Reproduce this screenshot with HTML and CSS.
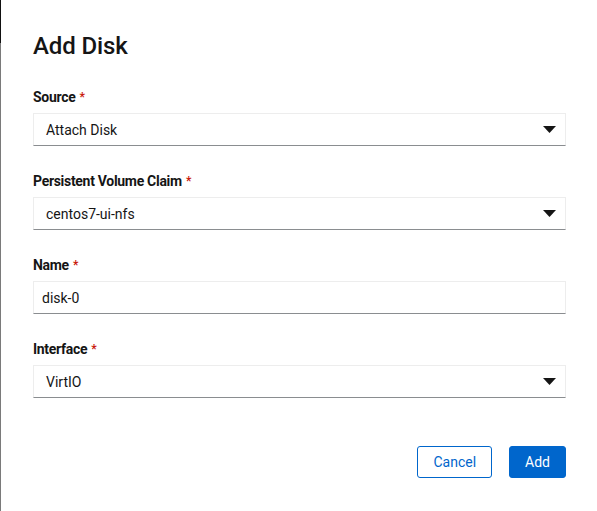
FILE: index.html
```html
<!DOCTYPE html>
<html>
<head>
<meta charset="utf-8">
<link rel="stylesheet" href="styles.css">
</head>
<body>
<div class="page">
  <div class="edge"><div class="edge-top"></div><div class="edge-rest"></div></div>
  <div class="modal">
    <h1 class="title">Add Disk</h1>
    <div class="form">
      <div class="group">
        <div class="label">Source <span class="req">*</span></div>
        <div class="select"><span>Attach Disk</span><svg class="caret" width="13" height="7" viewBox="0 0 13 7"><path d="M0 0H13L6.5 7Z"/></svg></div>
      </div>
      <div class="group">
        <div class="label">Persistent Volume Claim <span class="req">*</span></div>
        <div class="select"><span>centos7-ui-nfs</span><svg class="caret" width="13" height="7" viewBox="0 0 13 7"><path d="M0 0H13L6.5 7Z"/></svg></div>
      </div>
      <div class="group">
        <div class="label">Name <span class="req">*</span></div>
        <div class="input">disk-0</div>
      </div>
      <div class="group">
        <div class="label">Interface <span class="req">*</span></div>
        <div class="select"><span>VirtIO</span><svg class="caret" width="13" height="7" viewBox="0 0 13 7"><path d="M0 0H13L6.5 7Z"/></svg></div>
      </div>
    </div>
    <div class="actions">
      <button class="btn btn-secondary">Cancel</button>
      <button class="btn btn-primary">Add</button>
    </div>
  </div>
</div>
</body>
</html>
```
FILE: styles.css
```css
html, body {
  margin: 0;
  padding: 0;
  background: #fff;
}
body {
  font-family: Roboto, "Liberation Sans", sans-serif;
  color: #151515;
}
.page {
  display: flex;
  height: 511px;
}
.edge {
  width: 1px;
  display: flex;
  flex-direction: column;
}
.edge-top {
  height: 43px;
  background: #111;
}
.edge-rest {
  flex: 1;
  background: #7a7a7a;
}
.modal {
  flex: 1;
  padding: 31px 31px 0 32px;
}
.title {
  margin: 0;
  font-size: 24px;
  line-height: 30px;
  font-weight: 500;
  letter-spacing: -0.1px;
}
.form {
  margin-top: 26px;
  display: flex;
  flex-direction: column;
  gap: 25px;
}
.label {
  height: 20px;
  font-size: 14px;
  line-height: 20px;
  font-weight: 700;
  letter-spacing: -0.3px;
  margin-bottom: 6px;
}
.req {
  color: #c9190b;
  margin-left: 1px;
  font-size: 12px;
  line-height: 0;
  vertical-align: 1px;
}
.select, .input {
  box-sizing: border-box;
  height: 33px;
  border: 1px solid #ededed;
  border-bottom-color: #8a8d90;
  display: flex;
  align-items: center;
  font-size: 14px;
}
.select {
  padding: 0 9px 0 12px;
  justify-content: space-between;
}
.input {
  padding: 0 8px;
}
.caret {
  fill: #151515;
}
.actions {
  margin-top: 48px;
  display: flex;
  justify-content: flex-end;
  gap: 17px;
}
.btn {
  font-family: inherit;
  font-size: 14px;
  height: 32px;
  border-radius: 3px;
  padding: 0 15px;
  cursor: pointer;
}
.btn-secondary {
  background: #fff;
  color: #06c;
  border: 1px solid #06c;
}
.btn-primary {
  background: #06c;
  color: #fff;
  border: 1px solid #06c;
}
```
